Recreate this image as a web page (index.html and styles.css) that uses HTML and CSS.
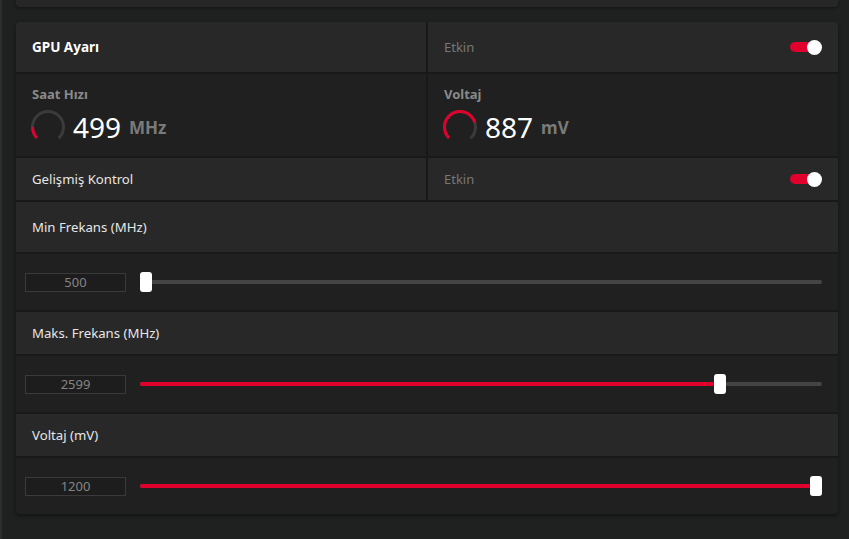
FILE: index.html
```html
<!DOCTYPE html>
<html lang="tr">
<head>
<meta charset="utf-8">
<title>GPU Ayarı</title>
<link rel="stylesheet" href="styles.css">
</head>
<body>
<div class="page">
  <div class="top-card"></div>
  <div class="panel">
    <div class="row split row-h50">
      <div class="cell head"><span class="title">GPU Ayarı</span></div>
      <div class="cell head toggle-cell">
        <span class="muted">Etkin</span>
        <span class="toggle"><span class="knob"></span></span>
      </div>
    </div>
    <div class="row split row-stat">
      <div class="cell stat">
        <div class="stat-label">Saat Hızı</div>
        <div class="stat-value">
          <svg class="gauge" width="36" height="36" viewBox="0 0 36 36">
            <circle cx="18" cy="18" r="15.5" fill="none" stroke="#3b3b3b" stroke-width="3" stroke-dasharray="73.04 100" transform="rotate(135 18 18)"/>
            <circle cx="18" cy="18" r="15.5" fill="none" stroke="#e1002d" stroke-width="3" stroke-dasharray="12 100" transform="rotate(135 18 18)"/>
          </svg>
          <span class="num">499</span><span class="unit">MHz</span>
        </div>
      </div>
      <div class="cell stat">
        <div class="stat-label">Voltaj</div>
        <div class="stat-value">
          <svg class="gauge" width="36" height="36" viewBox="0 0 36 36">
            <circle cx="18" cy="18" r="15.5" fill="none" stroke="#3b3b3b" stroke-width="3" stroke-dasharray="73.04 100" transform="rotate(135 18 18)"/>
            <circle cx="18" cy="18" r="15.5" fill="none" stroke="#e1002d" stroke-width="3" stroke-dasharray="56 100" transform="rotate(135 18 18)"/>
          </svg>
          <span class="num">887</span><span class="unit">mV</span>
        </div>
      </div>
    </div>
    <div class="row split row-h42">
      <div class="cell head"><span class="label">Gelişmiş Kontrol</span></div>
      <div class="cell head toggle-cell">
        <span class="muted">Etkin</span>
        <span class="toggle"><span class="knob"></span></span>
      </div>
    </div>
    <div class="row head row-h50"><span class="label">Min Frekans (MHz)</span></div>
    <div class="row slider-row">
      <div class="value-box">500</div>
      <div class="track" style="--p: 0">
        <div class="fill"></div>
        <div class="thumb"></div>
      </div>
    </div>
    <div class="row head row-h42"><span class="label">Maks. Frekans (MHz)</span></div>
    <div class="row slider-row">
      <div class="value-box">2599</div>
      <div class="track" style="--p: 0.857">
        <div class="fill"></div>
        <div class="thumb"></div>
      </div>
    </div>
    <div class="row head row-h42"><span class="label">Voltaj (mV)</span></div>
    <div class="row slider-row">
      <div class="value-box">1200</div>
      <div class="track" style="--p: 1">
        <div class="fill"></div>
        <div class="thumb"></div>
      </div>
    </div>
  </div>
</div>
</body>
</html>
```
FILE: styles.css
```css
* { box-sizing: border-box; }
html, body {
  margin: 0;
  padding: 0;
  background: #1f2121;
  height: 100%;
}
body {
  font-family: "Noto Sans", "Open Sans", sans-serif;
  font-size: 13px;
  color: #e8e8e8;
  border-left: 2px solid #2c2e2e;
  overflow: hidden;
}
.page {
  padding: 0 11px 0 14px;
}
.top-card {
  height: 7px;
  background: #272727;
  border-radius: 0 0 4px 4px;
  box-shadow: 0 1px 3px rgba(0,0,0,0.45);
  margin-bottom: 15px;
}
.panel {
  display: flex;
  flex-direction: column;
  gap: 2px;
  background: #191919;
  border-radius: 4px;
  overflow: hidden;
  box-shadow: 0 2px 4px rgba(0,0,0,0.45);
}
.row.split {
  display: grid;
  grid-template-columns: 1fr 1fr;
  gap: 2px;
}
.row-h50 { height: 50px; }
.row-h42 { height: 42px; }
.row-stat { height: 82px; }
.head {
  background: #282828;
  display: flex;
  align-items: center;
  padding: 0 16px;
}
.cell.head { height: 100%; }
.title {
  font-weight: 700;
  font-size: 13.5px;
  color: #ffffff;
}
.label { color: #e6e6e6; font-size: 13.2px; }
.muted { color: #777777; }
.toggle-cell { justify-content: space-between; }
.toggle {
  position: relative;
  width: 32px;
  height: 15px;
}
.toggle::before {
  content: "";
  position: absolute;
  left: 0;
  top: 2.5px;
  width: 22px;
  height: 10px;
  border-radius: 5px;
  background: #e1002d;
}
.knob {
  position: absolute;
  right: 0;
  top: 0;
  width: 15px;
  height: 15px;
  border-radius: 50%;
  background: #ffffff;
}
.stat {
  background: #202020;
  padding: 12px 16px 0;
}
.stat-label {
  font-weight: 700;
  color: #8a8a8a;
  line-height: 17px;
}
.stat-value {
  display: flex;
  align-items: center;
  margin-top: 6px;
  margin-left: -2px;
  height: 36px;
}
.gauge { flex: none; display: block; }
.num {
  font-size: 28px;
  color: #ffffff;
  margin-left: 7px;
  line-height: 36px;
}
.unit {
  font-size: 17px;
  font-weight: 700;
  color: #7a7a7a;
  margin-left: 8px;
  line-height: 36px;
  padding-top: 2px;
}
.slider-row {
  height: 56px;
  background: #202020;
  display: flex;
  align-items: center;
  padding: 0 16px 0 9px;
}
.value-box {
  width: 101px;
  height: 19px;
  border: 1px solid #3a3a3a;
  background: #1d1d1d;
  color: #858585;
  text-align: center;
  font-size: 13px;
  line-height: 17px;
  flex: none;
}
.track {
  position: relative;
  flex: 1;
  height: 4px;
  margin-left: 14px;
  background: #444444;
  border-radius: 2px;
}
.fill {
  height: 100%;
  width: calc((100% - 12px) * var(--p) + 6px);
  background: #e1002d;
  border-radius: 2px;
}
.thumb {
  position: absolute;
  top: -8px;
  left: calc((100% - 12px) * var(--p));
  width: 12px;
  height: 20px;
  background: #ffffff;
  border-radius: 3px;
}
```
